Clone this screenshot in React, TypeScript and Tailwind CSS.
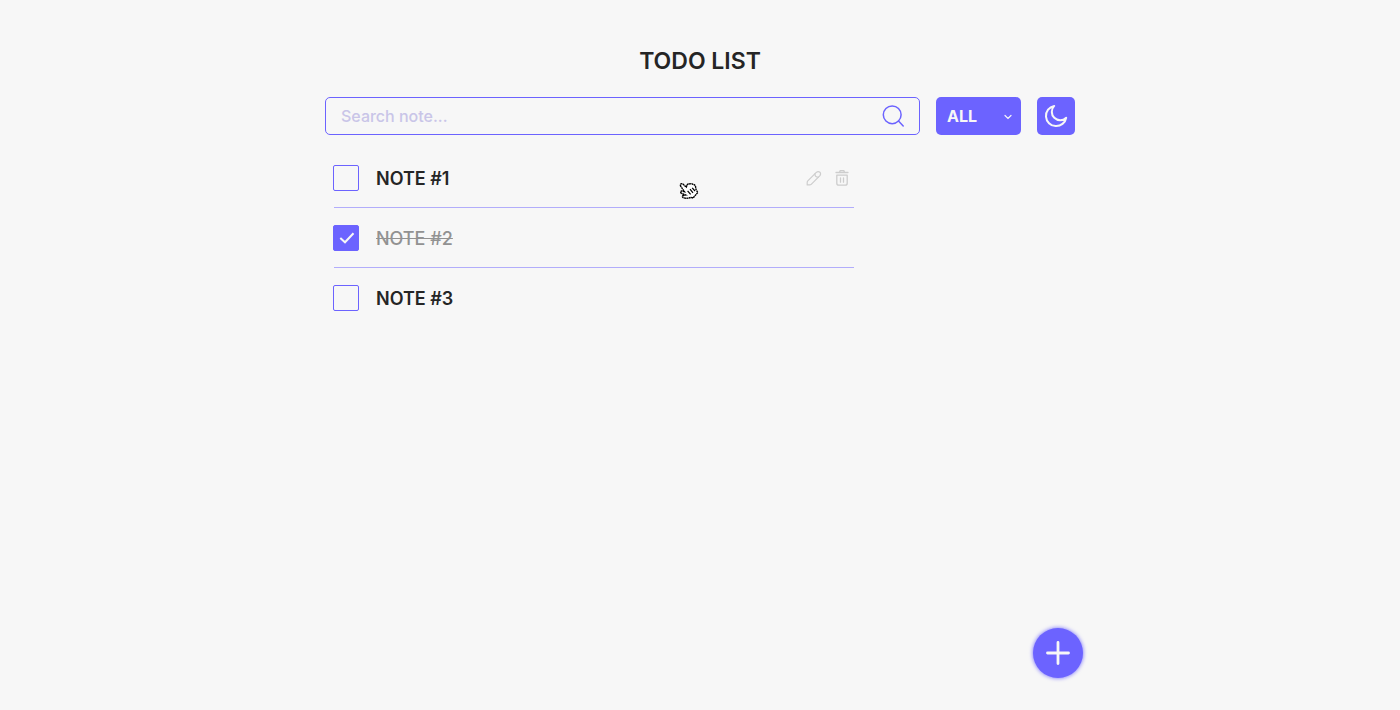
import { useState } from "react";

type Note = { id: number; title: string; done: boolean };

const initialNotes: Note[] = [
  { id: 1, title: "NOTE #1", done: false },
  { id: 2, title: "NOTE #2", done: true },
  { id: 3, title: "NOTE #3", done: false },
];

function SearchIcon() {
  return (
    <svg viewBox="0 0 22 22" className="size-[22px]" fill="none" stroke="#6c63ff" strokeWidth="1.5" strokeLinecap="round" aria-hidden="true">
      <circle cx="10.2" cy="9.8" r="8.9" />
      <path d="M16.5 16l4.7 4.9" />
    </svg>
  );
}

function MoonIcon() {
  return (
    <svg viewBox="0 0 24 24" className="size-6" fill="none" stroke="#f7f7f7" strokeWidth="2" strokeLinejoin="round" aria-hidden="true">
      <path d="M10.2 1.9A10.2 10.2 0 1 0 22.2 13.7A7.9 7.9 0 0 1 10.2 1.9Z" />
    </svg>
  );
}

function PencilIcon() {
  return (
    <svg viewBox="0 0 16 16" className="size-4" fill="none" stroke="#cdcdcd" strokeWidth="1.2" strokeLinecap="round" strokeLinejoin="round" aria-hidden="true">
      <path d="M1.8 10.9L10.3 2.4Q12.1 .8 13.9 2.2Q15.3 4 13.7 5.8L5.2 14.3Q4.6 14.9 3.7 14.9H1.2V12.4Q1.2 11.5 1.8 10.9Z" />
      <path d="M8.9 3.9Q9 7.1 12.2 7.2" />
    </svg>
  );
}

function TrashIcon() {
  return (
    <svg viewBox="0 0 16 18" className="h-[18px] w-4" fill="none" stroke="#cdcdcd" strokeWidth="1.3" strokeLinecap="round" strokeLinejoin="round" aria-hidden="true">
      <path d="M2 3.5H14M5.5 3.3L6.2 1.6H9.8L10.5 3.3" />
      <path d="M2.8 6.2H13.2V14.2Q13.2 16.2 11.2 16.2H4.8Q2.8 16.2 2.8 14.2ZM6.5 9V13.2M9.5 9V13.2" />
    </svg>
  );
}

function HandCursor() {
  return (
    <svg viewBox="0 0 20 18" className="pointer-events-none absolute top-[34px] left-[345px] h-[18px] w-5" aria-hidden="true">
      <path
        d="M1.5 2.4Q2.4 1 3.9 2L7.3 5.1L8.2 2.8Q9.5 1.2 10.9 2Q12.5 1 14 2.4Q15.9 2.3 16.5 4.4L17 7.5L18.8 10.5L14 16L12 15.4Q8.5 16.8 4.5 15.8Q2.6 15 4 13.5L6.6 13L2.2 11.2Q1 9.8 2.6 8.9L5.4 9.6L1.9 4.5Q1.1 3.4 1.5 2.4Z"
        fill="#fff"
        stroke="#000"
        strokeWidth="1.4"
        strokeDasharray="2 .4"
      />
      <path d="M8.6 8.8L11.6 12.4M11 7.2L14 10.8M13.2 5.8L16 9" stroke="#000" strokeWidth="1.2" />
    </svg>
  );
}

export default function App() {
  const [notes, setNotes] = useState(initialNotes);
  const [query, setQuery] = useState("");
  const [filter, setFilter] = useState("all");

  const toggle = (id: number) =>
    setNotes((list) => list.map((n) => (n.id === id ? { ...n, done: !n.done } : n)));

  const visible = notes.filter(
    (n) =>
      n.title.toLowerCase().includes(query.toLowerCase()) &&
      (filter === "all" || (filter === "complete") === n.done),
  );

  return (
    <div className="flex min-h-screen flex-col bg-[#f7f7f7] pb-8 font-['Inter',sans-serif] text-[#252525]">
      <main className="mx-auto w-full max-w-[750px] grow pt-10">
        <h1 className="pt-px text-center text-[23px] leading-10 font-semibold">TODO LIST</h1>

        <div className="mt-4 flex gap-4">
          <label className="flex h-[38px] grow items-center rounded-[5px] border border-[#6c63ff] px-[15px]">
            <input
              type="text"
              aria-label="Search note"
              placeholder="Search note..."
              value={query}
              onChange={(e) => setQuery(e.target.value)}
              className="min-w-0 grow bg-transparent leading-6 font-medium outline-none placeholder:text-[#c9c5e8]"
            />
            <SearchIcon />
          </label>

          <div className="relative">
            <select
              aria-label="Filter notes"
              value={filter}
              onChange={(e) => setFilter(e.target.value)}
              className="h-[38px] w-[85px] appearance-none rounded-[5px] bg-[#6c63ff] pl-[11px] leading-6 font-bold text-[#f7f7f7]"
            >
              <option value="all">ALL</option>
              <option value="complete">Complete</option>
              <option value="incomplete">Incomplete</option>
            </select>
            <svg viewBox="0 0 8 6" className="pointer-events-none absolute top-[17px] right-[9px] h-1.5 w-2" fill="none" stroke="#f7f7f7" strokeWidth="1.2" strokeLinecap="round" aria-hidden="true">
              <path d="M1 1.5L4 4.5L7 1.5" />
            </svg>
          </div>

          <button type="button" aria-label="Dark mode" className="flex size-[38px] items-center justify-center rounded-[5px] bg-[#6c63ff]">
            <MoonIcon />
          </button>
        </div>

        <ul className="mt-[13px] ml-[9px] max-w-[520px] divide-y divide-[#b2adfb]">
          {visible.map((note, i) => (
            <li key={note.id} className="relative flex h-[60px] items-center">
              <label className="-ml-px flex grow items-center gap-[17px] text-lg">
                <span className="grid size-[26px] place-items-center">
                  <input
                    type="checkbox"
                    checked={note.done}
                    onChange={() => toggle(note.id)}
                    className="col-start-1 row-start-1 size-[26px] appearance-none rounded-[2px] border border-[#6c63ff] checked:bg-[#6c63ff]"
                  />
                  {note.done && (
                    <svg viewBox="0 0 16 12" className="pointer-events-none col-start-1 row-start-1 ml-0.5 h-3 w-4" fill="none" stroke="#f7f7f7" strokeWidth="2" aria-hidden="true">
                      <path d="M1.3 6L6 10.3L14.5 1.3" />
                    </svg>
                  )}
                </span>
                <span className={note.done ? "pt-0.5 font-medium text-[#929292] line-through" : "pt-0.5 font-semibold"}>{note.title}</span>
              </label>
              {i === 0 && (
                <div className="flex items-center gap-3 pr-1">
                  <button type="button" aria-label={`Edit ${note.title}`}>
                    <PencilIcon />
                  </button>
                  <button type="button" aria-label={`Delete ${note.title}`}>
                    <TrashIcon />
                  </button>
                </div>
              )}
              {i === 0 && <HandCursor />}
            </li>
          ))}
        </ul>
      </main>

      <div className="mx-auto flex w-full max-w-[766px] justify-end">
        <button type="button" aria-label="Add note" className="flex size-[50px] items-center justify-center rounded-full bg-[#6c63ff] shadow-[0_0_4px_#6c63ff]">
          <svg viewBox="0 0 24 24" className="size-6" stroke="#f7f7f7" strokeWidth="2.8" strokeLinecap="round" aria-hidden="true">
            <path d="M12 1.5V22.5M1.5 12H22.5" />
          </svg>
        </button>
      </div>
    </div>
  );
}
